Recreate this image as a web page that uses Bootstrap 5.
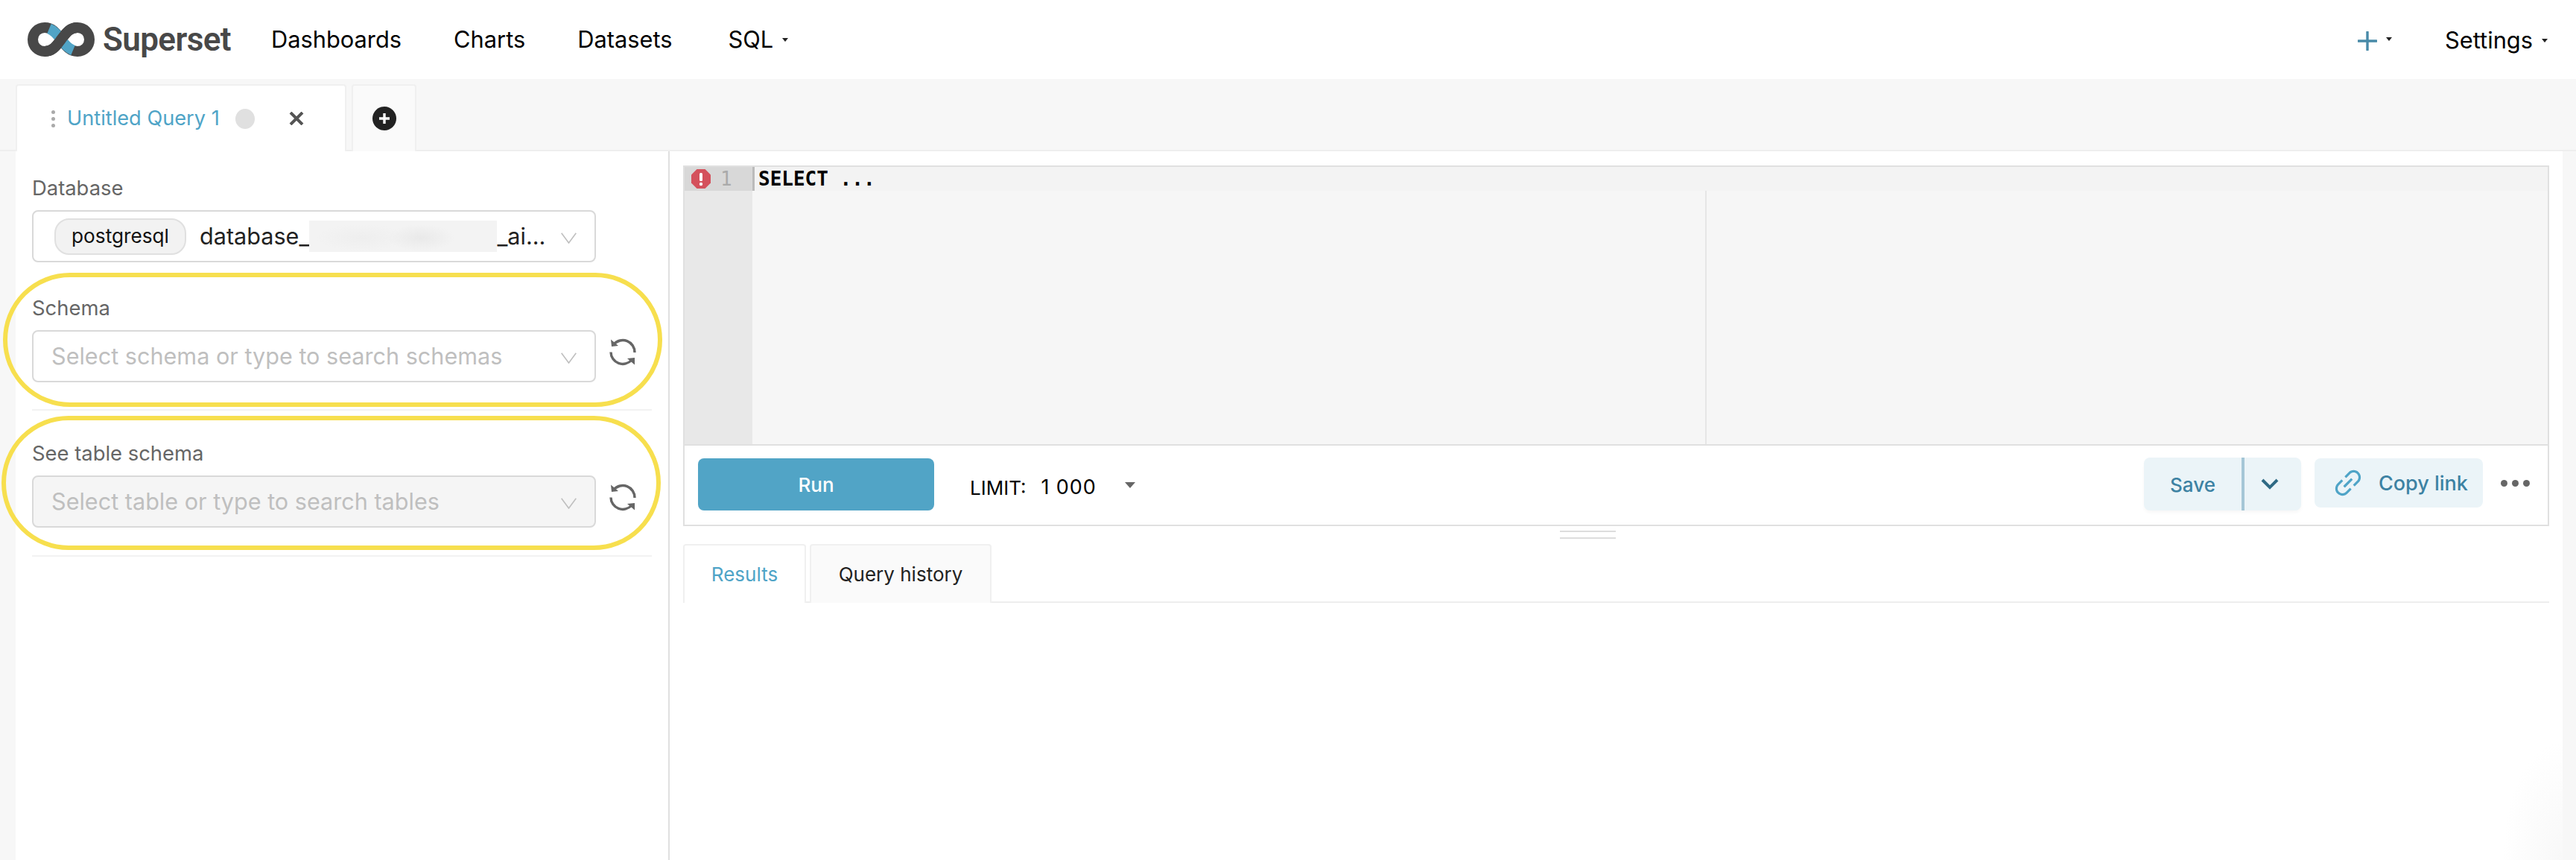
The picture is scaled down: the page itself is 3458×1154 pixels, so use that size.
<!DOCTYPE html>
<html lang="en"><head><meta charset="utf-8"><title>SQL Lab</title>
<link href="https://cdn.jsdelivr.net/npm/bootstrap@5.3.0/dist/css/bootstrap.min.css" rel="stylesheet">
<style>
html,body{height:100%;}
body{font-family:Inter,"Liberation Sans",sans-serif;background:#f7f7f7;color:#000;overflow:hidden;font-size:28px;}
.topbar{height:106px;background:#fff;padding:0 38px 0 37px;}
.logo-txt{font-family:Roboto,sans-serif;font-weight:600;font-size:44px;color:#484848;margin-left:11px;letter-spacing:-.6px;line-height:1;}
.menu-item{font-size:30.8px;color:#000;text-decoration:none;}
.mi-dash{margin-left:54px;}.mi-other{margin-left:70px;}.mi-sql{margin-left:75px;}
.mi-settings{margin-left:71px;margin-top:2px;}
.add-menu{margin-top:3px;}
.tiny-caret{display:inline-block;width:0;height:0;border:4px solid transparent;border-top:5px solid #222;margin-left:12px;vertical-align:middle;}
.tabstrip{height:97px;padding:7px 0 0 21px;border-bottom:2px solid #eee;}
.qtab{height:90px;width:444px;background:#fff;border:2px solid #f0f0f0;border-bottom:0;border-radius:4px 4px 0 0;padding-left:46px;}
.qtab-title{color:#4fa4c7;font-size:27.2px;margin-left:16px;}
.drag-dots{display:flex;flex-direction:column;gap:4px;}
.drag-dots i{display:block;width:5px;height:5px;border-radius:50%;background:#aaa;}
.unsaved{width:26px;height:27px;border-radius:50%;background:#e0e0e0;margin-left:21px;}
.tab-x{margin-right:55px;}
.addtab{height:90px;width:87px;margin-left:7px;background:#fafafa;border:2px solid #f0f0f0;border-bottom:0;border-radius:4px 4px 0 0;}
.workarea{height:calc(100% - 203px);padding:0 18px 0 21px;}
.sidepanel{width:878px;background:#fff;border-right:2px solid #e0e0e0;padding:0 22px;flex:none;}
.field-lab{font-size:27.4px;color:#666;line-height:32px;}
.field-first{padding-top:33px;height:149px;}
.field-ringed{position:relative;border-bottom:2px solid #f2f2f2;}
.field-schema{height:199px;padding-top:45px;}
.field-table{height:196px;padding-top:41px;}
.ring{position:absolute;width:885px;height:180px;border:6px solid #f7df4e;border-radius:90px/90px;pointer-events:none;}
.field-schema .ring{left:-39px;top:14px;}
.field-table .ring{left:-41px;top:7px;}
.sel-box{width:757px;height:70px;border:2px solid #d9d9d9;border-radius:8px;background:#fff;padding:0 24px;margin-top:14px;font-size:30.6px;position:relative;flex:none;}
.sel-dis{background:#f5f5f5;}
.sel-ph{color:#bfbfbf;}
.sel-chev{position:absolute;right:24px;top:28px;}
.db-tag{height:49px;width:177px;border:2px solid #e0e0e0;background:#f2f2f2;border-radius:20px;font-size:26.2px;margin-left:6px;margin-right:18px;flex:none;color:#111;}
.sel-db{padding-left:22px;}
.db-name{color:#222;}
.masked{display:inline-block;width:252px;height:42px;flex:none;background:radial-gradient(ellipse 45px 18px at 150px 23px,#e9e9e9,transparent),radial-gradient(ellipse 60px 18px at 70px 23px,#eeeeee,transparent),#f3f3f3;}
.refresh-ic{margin-left:18px;margin-top:25px;flex:none;}
.rightpane{flex:1;background:radial-gradient(ellipse 80px 160px at 100% 100%,#f8f8f8,#fff);padding:19px 18px 0 18px;min-width:0;}
.editor-wrap{border:2px solid #e0e0e0;height:484px;}
.ace-area{height:374px;background:#f6f6f6;border-bottom:2px solid #e0e0e0;position:relative;}
.ace-gutter{width:91px;background:#e8e8e8;flex:none;position:relative;}
.ace-row{height:32px;background:#d8d8d8;padding-left:8px;color:#aaa;font-family:"DejaVu Sans Mono",monospace;font-size:26px;line-height:32px;}
.ace-num{margin-left:12px;}
.ace-code{flex:1;position:relative;}
.ace-line{height:32px;background:#f3f3f3;font-family:"DejaVu Sans Mono",monospace;font-weight:700;font-size:26px;line-height:32px;padding-left:8px;color:#000;}
.ace-caret{position:absolute;left:0;top:0;width:3px;height:32px;background:#bbb;}
.ace-margin{position:absolute;left:1279px;top:32px;bottom:0;width:2px;background:#e6e6e6;}
.toolrow{height:106px;padding:17px 24px 0 18px;background:#fff;}
.btn-run{width:317px;height:70px;background:#51a4c6;color:#fff;border:0;border-radius:8px;font-size:26px;font-weight:500;}
.lim-lab{margin-left:48px;font-size:26px;margin-top:20px;}
.lim-val{margin-left:20px;font-size:27px;letter-spacing:.9px;margin-top:19px;}
.lim-caret{width:0;height:0;border:7px solid transparent;border-top:8px solid #666;margin-left:38px;margin-top:32px;}
.save-grp{height:71px;width:211px;background:#ebf4f8;border-radius:8px;color:#3d82a3;font-size:26px;font-weight:500;box-shadow:0 3px 4px rgba(0,0,0,.03);margin-top:-1px;}
.save-main{width:135px;height:100%;padding-top:2px;border-right:4px solid #a5c6d6;}
.save-more{flex:1;padding-right:9px;}
.copy-btn{height:66px;width:226px;margin-left:18px;background:#ebf4f8;border-radius:8px;color:#3d82a3;font-size:27px;font-weight:500;padding-left:25px;}
.copy-txt{margin-left:21px;padding-top:2px;}
.more-dots{gap:6px;margin-left:24px;margin-top:29px;}
.more-dots i{display:block;width:9px;height:9px;background:#666;border-radius:50%;}
.splitter{width:75px;margin:6px 0 0 1177px;height:11px;border-top:2px solid #ddd;border-bottom:2px solid #ddd;}
.res-tabs{margin-top:7px;height:79px;border-bottom:2px solid #eee;}
.rtab{height:79px;border:2px solid #f0f0f0;border-bottom:0;border-radius:4px 4px 0 0;font-size:26px;}
.rtab-on{width:165px;background:#fff;color:#4fa4c7;}
.rtab-off{width:244px;margin-left:5px;background:#fafafa;color:#222;}
</style></head><body>
<nav class="topbar d-flex align-items-center">
<svg width="90" height="46" viewBox="0 0 90 46"><path d="M23 7C34 7 39 15 45 23C51 31 56 39 67 39C76 39 83 32 83 23C83 14 76 7 67 7C56 7 51 15 45 23C39 31 34 39 23 39C14 39 7 32 7 23C7 14 14 7 23 7Z" fill="none" stroke="#484848" stroke-width="14"/><path d="M29 8.5C35 11 40 16 45 23C50 30 55 35 61 37.5" fill="none" stroke="#51a4c6" stroke-width="14"/><path d="M67 7C56 7 51 15 45 23C39 31 34 39 23 39" fill="none" stroke="#484848" stroke-width="14"/></svg>
<span class="logo-txt">Superset</span>
<a class="menu-item mi-dash" href="#">Dashboards</a><a class="menu-item mi-other" href="#">Charts</a><a class="menu-item mi-other" href="#">Datasets</a><a class="menu-item mi-sql" href="#">SQL<span class="tiny-caret"></span></a>
<span class="ms-auto d-flex align-items-center add-menu"><svg width="26" height="26" viewBox="0 0 26 26"><path d="M13 1V25M1 13H25" stroke="#488aa8" stroke-width="3.4" stroke-linecap="round"/></svg><span class="tiny-caret"></span></span>
<a class="menu-item mi-settings" href="#">Settings<span class="tiny-caret"></span></a>
</nav>
<div class="tabstrip d-flex align-items-start">
<div class="qtab d-flex align-items-center"><span class="drag-dots"><i></i><i></i><i></i></span><span class="qtab-title">Untitled Query 1</span><span class="unsaved"></span>
<svg class="ms-auto tab-x" width="20" height="18" viewBox="0 0 20 18"><path d="M2 1L18 17M18 1L2 17" stroke="#555" stroke-width="4"/></svg></div>
<div class="addtab d-flex align-items-center justify-content-center"><svg width="32" height="32" viewBox="0 0 32 32"><circle cx="16" cy="16" r="16" fill="#222"/><path d="M16 9V23M9 16H23" stroke="#fff" stroke-width="3.4"/></svg></div>
</div>
<div class="workarea d-flex">
<aside class="sidepanel">
<div class="field-first"><div class="field-lab">Database</div>
<div class="sel-box sel-db d-flex align-items-center"><span class="db-tag d-flex align-items-center justify-content-center">postgresql</span><span class="text-nowrap d-flex align-items-center db-name">database_<span class="masked"></span>_ai...</span><svg class="sel-chev" width="21" height="15" viewBox="0 0 21 15"><path d="M.7 .7L10.5 14L20.3 .7" fill="none" stroke="#bfbfbf" stroke-width="1.6"/></svg></div></div>
<div class="field-ringed field-schema"><span class="ring"></span><div class="field-lab">Schema</div>
<div class="d-flex align-items-start"><div class="sel-box d-flex align-items-center sel-ph">Select schema or type to search schemas<svg class="sel-chev" width="21" height="15" viewBox="0 0 21 15"><path d="M.7 .7L10.5 14L20.3 .7" fill="none" stroke="#bfbfbf" stroke-width="1.6"/></svg></div>
<svg class="refresh-ic" width="36" height="37" viewBox="0 0 36 37"><path d="M34 19A16 16 0 0 0 6 8M2 18.5A16 16 0 0 0 30 29" fill="none" stroke="#666" stroke-width="3.4"/><path d="M2 1.5L3 11L12 10ZM34 35.5L34 26L24 27Z" fill="#666"/></svg></div></div>
<div class="field-ringed field-table"><span class="ring"></span><div class="field-lab">See table schema</div>
<div class="d-flex align-items-start"><div class="sel-box sel-dis d-flex align-items-center sel-ph">Select table or type to search tables<svg class="sel-chev" width="21" height="15" viewBox="0 0 21 15"><path d="M.7 .7L10.5 14L20.3 .7" fill="none" stroke="#bfbfbf" stroke-width="1.6"/></svg></div>
<svg class="refresh-ic" width="36" height="37" viewBox="0 0 36 37"><path d="M34 19A16 16 0 0 0 6 8M2 18.5A16 16 0 0 0 30 29" fill="none" stroke="#666" stroke-width="3.4"/><path d="M2 1.5L3 11L12 10ZM34 35.5L34 26L24 27Z" fill="#666"/></svg></div></div>
</aside>
<main class="rightpane">
<div class="editor-wrap">
<div class="ace-area d-flex">
<div class="ace-gutter"><div class="ace-row d-flex align-items-center"><svg width="28" height="28" viewBox="0 0 28 28"><path d="M8.5 1H19.5L27 8.5V19.5L19.5 27H8.5L1 19.5V8.5Z" fill="#d4515c"/><rect x="12" y="6" width="4" height="11" rx="1.5" fill="#fff"/><circle cx="14" cy="21" r="2.2" fill="#fff"/></svg><span class="ace-num">1</span></div></div>
<div class="ace-code"><div class="ace-line">SELECT ...</div><span class="ace-caret"></span><span class="ace-margin"></span></div>
</div>
<div class="toolrow d-flex align-items-start">
<button class="btn-run">Run</button><span class="lim-lab">LIMIT:</span><span class="lim-val">1 000</span><span class="lim-caret"></span>
<div class="save-grp d-flex align-items-center ms-auto"><div class="save-main d-flex align-items-center justify-content-center">Save</div><div class="save-more d-flex align-items-center justify-content-center"><svg width="24" height="15" viewBox="0 0 24 15"><path d="M2 2L12 12L22 2" fill="none" stroke="#2f6a85" stroke-width="4"/></svg></div></div>
<div class="copy-btn d-flex align-items-center"><svg width="40" height="40" viewBox="64 64 896 896"><path fill="#4fa4c7" d="M574 665.4a8.03 8.03 0 0 0-11.3 0L446.5 781.6c-53.8 53.8-144.6 59.5-204 0-59.5-59.5-53.8-150.2 0-204l116.2-116.2c3.1-3.1 3.1-8.2 0-11.3l-39.8-39.8a8.03 8.03 0 0 0-11.3 0L191.4 526.5c-84.6 84.6-84.6 221.5 0 306s221.5 84.6 306 0l116.2-116.2c3.1-3.1 3.1-8.2 0-11.3L574 665.4zm258.6-474c-84.6-84.6-221.5-84.6-306 0L410.3 307.6a8.03 8.03 0 0 0 0 11.3l39.7 39.7c3.1 3.1 8.2 3.1 11.3 0l116.2-116.2c53.8-53.8 144.6-59.5 204 0 59.5 59.5 53.8 150.2 0 204L665.3 562.6a8.03 8.03 0 0 0 0 11.3l39.8 39.8c3.1 3.1 8.2 3.1 11.3 0l116.2-116.2c84.5-84.6 84.5-221.5 0-306.1zM610.1 372.3a8.03 8.03 0 0 0-11.3 0L372.3 598.7a8.03 8.03 0 0 0 0 11.3l39.6 39.6c3.1 3.1 8.2 3.1 11.3 0l226.4-226.4c3.1-3.1 3.1-8.2 0-11.3l-39.5-39.6z"/></svg><span class="copy-txt">Copy link</span></div>
<div class="more-dots d-flex"><i></i><i></i><i></i></div>
</div>
</div>
<div class="splitter"></div>
<div class="res-tabs d-flex"><div class="rtab rtab-on d-flex align-items-center justify-content-center">Results</div><div class="rtab rtab-off d-flex align-items-center justify-content-center">Query history</div></div>
</main>
</div>
<script src="https://cdn.jsdelivr.net/npm/bootstrap@5.3.0/dist/js/bootstrap.bundle.min.js"></script>
</body></html>
